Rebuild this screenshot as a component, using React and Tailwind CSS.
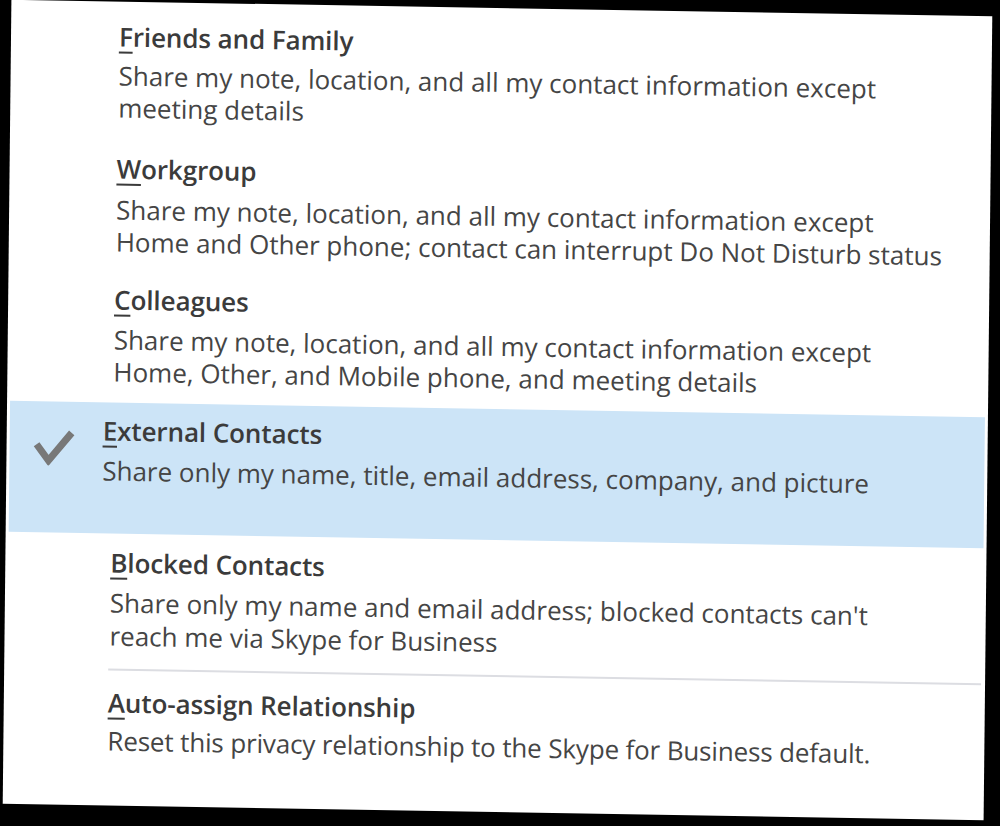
function Title({ k, rest }) {
  return (
    <div className="h-[32px] leading-[32px] text-[26px] font-semibold tracking-[-0.1px] text-[#3b3b3b] whitespace-nowrap">
      <span className="underline decoration-[2px] underline-offset-[5px]">{k}</span>
      {rest}
    </div>
  );
}

function Desc({ lines, className = '' }) {
  return (
    <div className={`text-[26px] text-[#454545] whitespace-nowrap ${className}`}>
      {lines.map((l) => (
        <div key={l}>{l}</div>
      ))}
    </div>
  );
}

export default function App() {
  return (
    <div className="w-[1000px] h-[826px] bg-black overflow-hidden pl-[7px] pt-[8px] font-['Open_Sans',sans-serif]">
      <div className="w-[981px] h-[804px] bg-white rotate-[0.62deg] skew-y-[0.34deg] pt-[19px] flex flex-col">
        {/* Friends and Family */}
        <div className="pl-[108px]">
          <Title k="F" rest="riends and Family" />
          <Desc
            className="mt-[7px] leading-[32px]"
            lines={['Share my note, location, and all my contact information except', 'meeting details']}
          />
        </div>

        {/* Workgroup */}
        <div className="pl-[107px] mt-[29px]">
          <Title k="W" rest="orkgroup" />
          <Desc
            className="mt-[9px] leading-[32px]"
            lines={['Share my note, location, and all my contact information except', 'Home and Other phone; contact can interrupt Do Not Disturb status']}
          />
        </div>

        {/* Colleagues */}
        <div className="pl-[106px] mt-[26px]">
          <Title k="C" rest="olleagues" />
          <Desc
            className="mt-[8px] leading-[32px]"
            lines={['Share my note, location, and all my contact information except', 'Home, Other, and Mobile phone, and meeting details']}
          />
        </div>

        {/* selected: External Contacts */}
        <div className="mx-[3px] mt-[15px] h-[131px] shrink-0 bg-[#cce4f7] flex pt-[12px]">
          <div className="w-[93px] shrink-0 pt-[16px]">
            <svg width="44" height="36" viewBox="0 0 44 36" className="ml-[23px]">
              <polyline points="4,15 16,31 39,3" fill="none" stroke="#787878" strokeWidth="7" />
            </svg>
          </div>
          <div>
            <Title k="E" rest="xternal Contacts" />
            <Desc className="mt-[8px] leading-[32px]" lines={['Share only my name, title, email address, company, and picture']} />
          </div>
        </div>

        {/* Blocked Contacts */}
        <div className="pl-[105px] mt-[13px]">
          <Title k="B" rest="locked Contacts" />
          <Desc
            className="mt-[8px] leading-[33px]"
            lines={["Share only my name and email address; blocked contacts can't", 'reach me via Skype for Business']}
          />
        </div>

        <div className="ml-[104px] mr-[4px] mt-[16px] h-[2px] shrink-0 bg-[#dcdde2]" />

        {/* Auto-assign Relationship */}
        <div className="pl-[104px] mt-[16px]">
          <Title k="A" rest="uto-assign Relationship" />
          <Desc
            className="mt-[6px] leading-[32px] tracking-[-0.15px]"
            lines={['Reset this privacy relationship to the Skype for Business default.']}
          />
        </div>
      </div>
    </div>
  );
}
